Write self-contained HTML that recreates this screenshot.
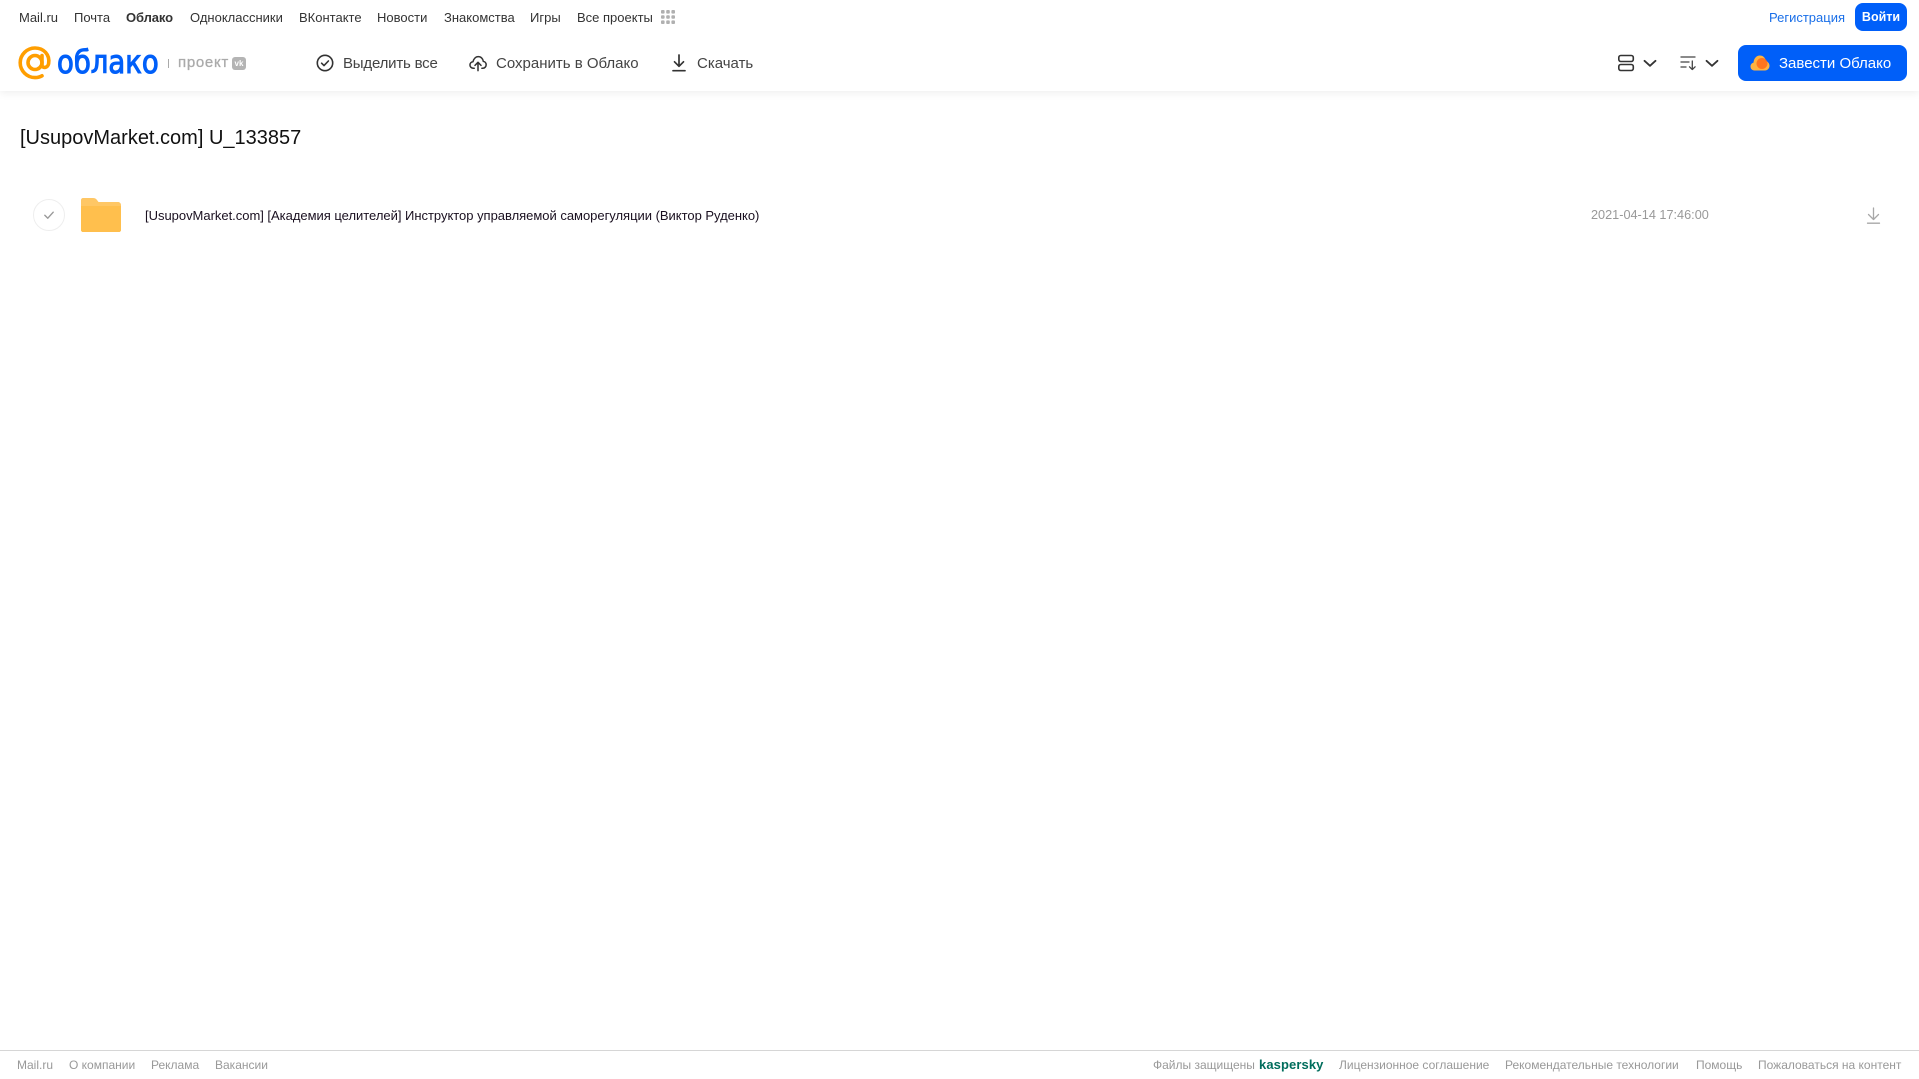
<!DOCTYPE html>
<html lang="ru"><head><meta charset="utf-8"><title>Облако</title>
<style>
html,body{margin:0;padding:0;width:1919px;height:1079px;overflow:hidden;background:#fff;font-family:"Liberation Sans",Arial,sans-serif}
.t{position:absolute;white-space:nowrap}
.n{top:9px;font-size:13px;line-height:15px;color:#333;padding-top:1px}
.a{top:55px;font-size:15px;line-height:18px;color:#444}
.f{top:1058px;font-size:12px;line-height:14px;color:#999}
svg{position:absolute;display:block}
</style></head><body>
<div style="position:absolute;left:0;top:0;width:1919px;height:91px;background:#fff;box-shadow:0 2px 8px rgba(0,0,0,.07)"></div>

<span class="t n" style="left:19px">Mail.ru</span>
<span class="t n" style="left:74px">Почта</span>
<span class="t n" style="left:126px;font-weight:bold;letter-spacing:-.1px">Облако</span>
<span class="t n" style="left:190px">Одноклассники</span>
<span class="t n" style="left:299px">ВКонтакте</span>
<span class="t n" style="left:377px">Новости</span>
<span class="t n" style="left:444px">Знакомства</span>
<span class="t n" style="left:530px">Игры</span>
<span class="t n" style="left:577px">Все проекты</span>
<svg style="left:660px;top:9px" width="16" height="16" viewBox="0 0 16 16" fill="#b0b0b0"><rect x="1" y="1" width="3.6" height="3.6" rx="1"/><rect x="6.2" y="1" width="3.6" height="3.6" rx="1"/><rect x="11.4" y="1" width="3.6" height="3.6" rx="1"/><rect x="1" y="6.2" width="3.6" height="3.6" rx="1"/><rect x="6.2" y="6.2" width="3.6" height="3.6" rx="1"/><rect x="11.4" y="6.2" width="3.6" height="3.6" rx="1"/><rect x="1" y="11.4" width="3.6" height="3.6" rx="1"/><rect x="6.2" y="11.4" width="3.6" height="3.6" rx="1"/><rect x="11.4" y="11.4" width="3.6" height="3.6" rx="1"/></svg>

<span class="t n" style="left:1769px;color:#1a6fe8">Регистрация</span>
<div class="t" style="left:1855px;top:3px;width:52px;height:28px;border-radius:8px;background:#005ff9;color:#fff;font-size:12.5px;font-weight:bold;line-height:28px;text-align:center">Войти</div>

<svg style="left:18px;top:46px" width="34" height="34" viewBox="0 0 34 34" fill="none" stroke="#ff9e00" stroke-width="3.6"><circle cx="17" cy="16.5" r="7"/><path d="M24 9.5v9.5c0 3.4 5.6 3.4 6.6-1.2C32.2 8.6 25.6 2 17 2 9 2 2.2 8.6 2.2 16.8 2.2 25 9 31.6 17 31.6c2.8 0 5-.6 7-1.8" stroke-linecap="round"/></svg>
<span class="t" style="left:57px;top:42px;font-size:32px;line-height:40px;color:#005ff9;-webkit-text-stroke:1.1px #005ff9;font-family:'DejaVu Sans',sans-serif;transform-origin:0 50%;transform:scaleX(.86)">облако</span>
<div style="position:absolute;left:168px;top:59px;width:1px;height:9px;background:#aaa"></div>
<span class="t" style="left:178px;top:54px;font-size:15px;line-height:18px;color:#aaa;-webkit-text-stroke:.3px #aaa;letter-spacing:.7px">проект</span>
<div class="t" style="left:232px;top:57px;width:14px;height:13px;border-radius:3px;background:#b4b4b4;color:#fff;font-size:8px;font-weight:bold;line-height:13px;text-align:center">vk</div>

<svg style="left:316px;top:54px" width="18" height="18" viewBox="0 0 18 18" fill="none" stroke="#333" stroke-width="1.6"><circle cx="9" cy="9" r="7.7"/><path d="M5.6 9.2l2.4 2.4 4.4-4.6" stroke-linecap="round" stroke-linejoin="round"/></svg>
<span class="t a" style="left:343px;letter-spacing:-.2px">Выделить все</span>
<svg style="left:469px;top:54px" width="18" height="18" viewBox="0 0 19 18" fill="none" stroke="#333" stroke-width="1.6" stroke-linecap="round" stroke-linejoin="round"><path d="M5.5 14.500H4.600C2.600 14.500 1 13 1 11.100c0-1.800 1.400-3.200 3.200-3.400C4.800 4.600 7 2.300 9.800 2.300c2.900 0 5 2.200 5.300 5 1.800.2 3 1.800 3 3.600 0 1.900-1.500 3.600-3.500 3.600h-1"/><path d="M9.500 17V8.500M6.300 11.500l3.200-3.200 3.200 3.200"/></svg>
<span class="t a" style="left:496px">Сохранить в Облако</span>
<svg style="left:671px;top:54px" width="16" height="18" viewBox="0 0 16 18" fill="none" stroke="#333" stroke-width="1.7" stroke-linecap="round" stroke-linejoin="round"><path d="M8 1v11M3.500 7.800L8 12.300l4.500-4.500M2 16.700h12"/></svg>
<span class="t a" style="left:697px">Скачать</span>

<svg style="left:1617px;top:54px" width="18" height="18" viewBox="0 0 18 18" fill="none" stroke="#333" stroke-width="1.6"><rect x="1.800" y="1.500" width="14.500" height="6" rx="2"/><rect x="1.800" y="10.500" width="14.500" height="6" rx="2"/></svg>
<svg style="left:1643px;top:59px" width="14" height="9" viewBox="0 0 14 9" fill="none" stroke="#333" stroke-width="1.8" stroke-linecap="round" stroke-linejoin="round"><path d="M1.500 1.800L7 6.800l5.500-5"/></svg>
<svg style="left:1680px;top:55px" width="17" height="16" viewBox="0 0 17 16" fill="none" stroke="#444" stroke-width="1.3" stroke-linecap="round" stroke-linejoin="round"><path d="M1 2h14M1 7h8M1 12h5M12.300 6v8.500M9.500 11.800l2.800 2.800 2.800-2.800"/></svg>
<svg style="left:1705px;top:59px" width="14" height="9" viewBox="0 0 14 9" fill="none" stroke="#333" stroke-width="1.8" stroke-linecap="round" stroke-linejoin="round"><path d="M1.500 1.800L7 6.800l5.500-5"/></svg>

<div style="position:absolute;left:1738px;top:45px;width:169px;height:36px;border-radius:8px;background:#005ff9"></div>
<svg style="left:1750px;top:54px" width="20" height="17" viewBox="0 0 20 17"><path d="M4.500 16.500C2 16.500 0.500 14.600 0.500 12.500 0.500 10.500 1.800 9 3.500 8.600 3.800 4.500 6.500 1.500 9.800 1.500c3.300 0 5.600 2.400 6 5.500 2.100.4 3.700 2.600 3.700 4.800 0 2.700-2 4.700-4.500 4.700z" fill="#ffb340"/><circle cx="12" cy="9.500" r="5.500" fill="#ff6a1a" opacity=".85"/></svg>
<span class="t" style="left:1779px;top:55px;font-size:15px;line-height:18px;color:#fff">Завести Облако</span>

<span class="t" style="left:20px;top:125px;font-size:20px;line-height:26px;color:#111">[UsupovMarket.com] U_133857</span>

<svg style="left:33px;top:199px" width="32" height="32" viewBox="0 0 32 32" fill="none"><circle cx="16" cy="16" r="15.500" stroke="#eee"/><path d="M11.800 16.300l3 2.900 5.400-6" stroke="#999" stroke-width="1.400" stroke-linecap="round" stroke-linejoin="round"/></svg>
<svg style="left:81px;top:198px" width="40" height="34" viewBox="0 0 40 34"><path d="M2 0h10c2 0 3 .8 4 2l1.500 2H37c1.700 0 3 1.300 3 3v25c0 1.100-.9 2-2 2H2c-1.100 0-2-.9-2-2V2C0 .9.900 0 2 0z" fill="#ffc765"/><path d="M0 8h40v24c0 1.100-.9 2-2 2H2c-1.100 0-2-.9-2-2z" fill="#ffbf4d"/></svg>
<span class="t" style="left:145px;top:208px;font-size:13px;line-height:15px;color:#1a1020;letter-spacing:-.02px">[UsupovMarket.com] [Академия целителей] Инструктор управляемой саморегуляции (Виктор Руденко)</span>
<span class="t" style="left:1591px;top:208px;font-size:12.7px;line-height:15px;color:#999">2021-04-14 17:46:00</span>
<svg style="left:1866px;top:206px" width="15" height="19" viewBox="0 0 15 19" fill="none" stroke="#a8a8a8" stroke-width="1.300" stroke-linecap="round" stroke-linejoin="round"><path d="M7.500 2v11.500M2.500 8.500l5 5 5-5M1.500 17.200h12"/></svg>

<div style="position:absolute;left:0;top:1050px;width:1919px;height:1px;background:#d6d6d6"></div>
<span class="t f" style="left:17px">Mail.ru</span>
<span class="t f" style="left:69px">О компании</span>
<span class="t f" style="left:151px">Реклама</span>
<span class="t f" style="left:215px">Вакансии</span>
<span class="t f" style="left:1153px">Файлы защищены</span>
<span class="t f" style="left:1259px;color:#006d5c;font-weight:bold;font-size:13px;letter-spacing:.1px">kaspersky</span>
<span class="t f" style="left:1339px">Лицензионное соглашение</span>
<span class="t f" style="left:1505px">Рекомендательные технологии</span>
<span class="t f" style="left:1696px">Помощь</span>
<span class="t f" style="left:1758px">Пожаловаться на контент</span>
</body></html>
